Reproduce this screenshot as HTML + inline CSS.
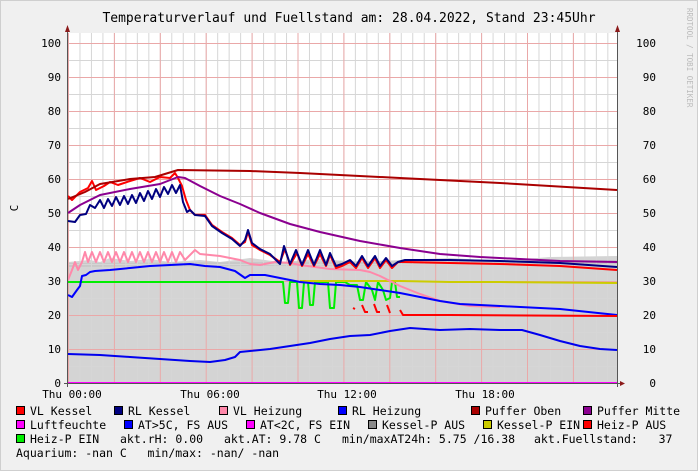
<!DOCTYPE html>
<html><head><meta charset="utf-8"><style>
html,body{margin:0;padding:0;background:#f0f0f0;}
svg{display:block;font-family:"DejaVu Sans Mono","Liberation Mono",monospace;}
text{white-space:pre;}
</style></head><body>
<svg width="698" height="471" viewBox="0 0 698 471" xmlns="http://www.w3.org/2000/svg">
<defs>
<pattern id="vmin" patternUnits="userSpaceOnUse" x="68" y="0" width="11.475" height="10"><line x1="0.5" y1="0" x2="0.5" y2="10" stroke="#d6d6d6" stroke-width="1"/></pattern>
<pattern id="vmaj" patternUnits="userSpaceOnUse" x="68" y="0" width="45.9" height="10"><line x1="0.5" y1="0" x2="0.5" y2="10" stroke="#eaa8a8" stroke-width="1"/></pattern>
<pattern id="hmin" patternUnits="userSpaceOnUse" x="0" y="383" width="10" height="17"><line x1="0" y1="0.5" x2="10" y2="0.5" stroke="#d6d6d6" stroke-width="1"/></pattern>
<pattern id="hmaj" patternUnits="userSpaceOnUse" x="0" y="383" width="10" height="34"><line x1="0" y1="0.5" x2="10" y2="0.5" stroke="#eaa8a8" stroke-width="1"/></pattern>
</defs>
<rect x="0" y="0" width="698" height="471" fill="#f0f0f0"/>
<rect x="0.5" y="0.5" width="697" height="470" fill="none" stroke="#cfcfcf"/>
<text x="349" y="22" text-anchor="middle" font-size="13" fill="#000">Temperaturverlauf und Fuellstand am: 28.04.2022, Stand 23:45Uhr</text>
<text transform="translate(687,8) rotate(90)" font-size="7.5" fill="#bbb">RRDTOOL / TOBI OETIKER</text>
<rect x="68" y="33" width="549" height="350" fill="#fff"/>
<path d="M68 383 L68 262 L90 260 L100 262 L110 258 L130 261 L150 259 L170 262 L200 260 L220 262 L250 258 L280 262 L320 259 L360 262 L400 260 L450 258 L500 261 L550 257 L617 256 L617 383 Z" fill="#d4d4d4"/>
<path d="M68 265 L617 262" stroke="#c8c8c8" stroke-width="4" fill="none"/>
<rect x="68" y="33" width="549" height="350" fill="url(#vmin)"/>
<rect x="68" y="33" width="549" height="350" fill="url(#hmin)"/>
<rect x="68" y="33" width="549" height="350" fill="url(#vmaj)"/>
<rect x="68" y="33" width="549" height="350" fill="url(#hmaj)"/>
<g fill="none" stroke-width="2" stroke-linejoin="round">
<path d="M68 282 L280 282 L283 282 L285 303 L288 303 L290 282 L297 282 L299 308 L302 308 L304 282 L308 282 L310 305 L313 305 L315 282 L328 282 L330 308 L334 308 L336 282 L345 282 L350 285 L357 285 L360 300 L363 300 L366 282 L372 290 L375 300 L378 282 L383 290 L386 300 L390 298 L392 282 L395 282 L397 297 L400 297" stroke="#00ee00"/>
<path d="M300 281 L400 281 L450 282 L500 282 L617 283" stroke="#cccc00"/>
<path d="M68 354 L100 355 L130 357 L160 359 L190 361 L210 362 L225 360 L235 357 L240 352 L250 351 L270 349 L290 346 L310 343 L330 339 L350 336 L370 335 L390 331 L410 328 L440 330 L470 329 L500 330 L522 330 L540 335 L560 341 L580 346 L600 349 L617 350" stroke="#0000ee"/>
<path d="M68 280 L72 270 L75 262 L78 270 L82 262 L85 252 L88 262 L92 252 L96 262 L100 252 L104 262 L108 252 L112 262 L116 252 L120 262 L124 252 L128 262 L132 252 L136 262 L140 252 L144 262 L148 252 L152 262 L156 252 L160 262 L164 252 L168 262 L172 252 L176 262 L180 252 L185 260 L195 250 L200 254 L220 256 L240 260 L250 264 L260 265 L275 262 L290 263 L300 265 L330 269 L360 270 L370 272 L380 276 L400 286 L420 294 L440 301 L470 306 L500 307" stroke="#ff88aa"/>
<path d="M68 295 L72 297 L77 290 L80 286 L82 276 L86 275 L90 272 L95 271 L110 270 L130 268 L150 266 L170 265 L190 264 L205 266 L220 267 L235 271 L245 278 L250 275 L265 275 L280 278 L300 282 L320 284 L340 285 L360 287 L380 290 L400 293 L420 297 L440 301 L460 304 L500 306 L560 309 L617 315" stroke="#0000ff"/>
<path d="M353 308 L355 309 M362 305 L365 312 L368 312 M374 304 L377 312 L380 312 M387 305 L390 313 M400 310 L403 315 L450 315 L617 316" stroke="#ff0000"/>
<path d="M68 196 L72 200 L80 192 L88 188 L92 181 L96 190 L104 186 L110 182 L118 185 L130 181 L140 178 L150 182 L160 177 L170 178 L175 173 L178 178 L182 186 L186 200 L190 210 L195 215 L205 215 L212 225 L222 232 L232 238 L240 245 L245 242 L248 232 L252 245 L260 250 L270 255 L280 262 L285 249 L290 265 L297 253 L302 266 L308 254 L314 266 L320 254 L326 266 L330 255 L336 268 L342 266 L350 262 L356 268 L362 258 L368 268 L375 258 L380 268 L386 260 L392 268 L398 262 L405 262 L450 263 L500 264 L560 266 L617 270" stroke="#ff0000"/>
<path d="M68 221 L75 222 L80 215 L86 214 L90 205 L95 208 L100 200 L104 208 L108 199 L112 206 L116 197 L120 205 L124 196 L128 204 L132 195 L136 203 L140 193 L144 201 L148 191 L152 199 L156 189 L160 197 L164 187 L168 194 L172 185 L176 193 L180 185 L183 202 L187 212 L190 210 L195 215 L205 216 L212 226 L222 233 L232 239 L240 246 L245 240 L248 230 L252 243 L260 249 L270 254 L280 264 L284 246 L290 264 L296 250 L302 265 L308 250 L314 265 L320 250 L326 265 L330 253 L336 266 L342 264 L350 260 L356 266 L362 256 L368 266 L375 256 L380 266 L386 258 L392 266 L398 262 L405 260 L450 260 L500 261 L560 263 L617 267" stroke="#000080"/>
<path d="M68 213 L80 205 L100 195 L130 189 L160 184 L178 177 L185 178 L200 186 L220 196 L240 204 L260 213 L290 224 L320 232 L360 241 L400 248 L440 254 L480 257 L520 259 L560 261 L617 262" stroke="#8b0090"/>
<path d="M68 199 L85 192 L100 184 L130 179 L155 177 L178 170 L250 171 L300 173 L400 178 L500 183 L617 190" stroke="#aa0000"/>
</g>
<line x1="68" y1="383" x2="617" y2="383" stroke="#ff00ff" stroke-width="2"/>
<line x1="67.5" y1="30" x2="67.5" y2="387" stroke="#555"/>
<line x1="617.5" y1="30" x2="617.5" y2="387" stroke="#555"/>
<line x1="64" y1="383.5" x2="620" y2="383.5" stroke="#555"/>
<path d="M65 32 L70 32 L67.5 25 Z M615 32 L620 32 L617.5 25 Z M620 381 L620 386 L625 383.5 Z" fill="#8b1a1a"/>
<g font-size="11" fill="#000" text-anchor="end">
<text x="61" y="47">100</text><text x="61" y="81">90</text><text x="61" y="115">80</text><text x="61" y="149">70</text><text x="61" y="183">60</text><text x="61" y="217">50</text><text x="61" y="251">40</text><text x="61" y="285">30</text><text x="61" y="319">20</text><text x="61" y="353">10</text><text x="61" y="387">0</text>
<text x="656" y="47">100</text><text x="656" y="81">90</text><text x="656" y="115">80</text><text x="656" y="149">70</text><text x="656" y="183">60</text><text x="656" y="217">50</text><text x="656" y="251">40</text><text x="656" y="285">30</text><text x="656" y="319">20</text><text x="656" y="353">10</text><text x="656" y="387">0</text>
</g>
<text transform="translate(18,208) rotate(-90)" font-size="11" text-anchor="middle">C</text>
<g font-size="11" text-anchor="middle">
<text x="72" y="398">Thu 00:00</text><text x="210" y="398">Thu 06:00</text><text x="347" y="398">Thu 12:00</text><text x="485" y="398">Thu 18:00</text>
</g>
<g stroke="#000" stroke-width="1">
<rect x="16.5" y="406.5" width="8" height="8" fill="#ff0000"/>
<rect x="114.5" y="406.5" width="8" height="8" fill="#000080"/>
<rect x="219.5" y="406.5" width="8" height="8" fill="#ff88aa"/>
<rect x="338.5" y="406.5" width="8" height="8" fill="#0000ff"/>
<rect x="471.5" y="406.5" width="8" height="8" fill="#aa0000"/>
<rect x="583.5" y="406.5" width="8" height="8" fill="#8b0090"/>
<rect x="16.5" y="420.5" width="8" height="8" fill="#ff00ff"/>
<rect x="124.5" y="420.5" width="8" height="8" fill="#0000ff"/>
<rect x="246.5" y="420.5" width="8" height="8" fill="#ff00ff"/>
<rect x="368.5" y="420.5" width="8" height="8" fill="#888888"/>
<rect x="483.5" y="420.5" width="8" height="8" fill="#cccc00"/>
<rect x="583.5" y="420.5" width="8" height="8" fill="#ff0000"/>
<rect x="16.5" y="434.5" width="8" height="8" fill="#00ee00"/>
</g>
<g font-size="11.5" fill="#000">
<text x="30" y="415">VL Kessel</text>
<text x="128" y="415">RL Kessel</text>
<text x="233" y="415">VL Heizung</text>
<text x="352" y="415">RL Heizung</text>
<text x="485" y="415">Puffer Oben</text>
<text x="597" y="415">Puffer Mitte</text>
<text x="30" y="429">Luftfeuchte</text>
<text x="138" y="429">AT&gt;5C, FS AUS</text>
<text x="260" y="429">AT&lt;2C, FS EIN</text>
<text x="382" y="429">Kessel-P AUS</text>
<text x="497" y="429">Kessel-P EIN</text>
<text x="597" y="429">Heiz-P AUS</text>
<text x="30" y="443">Heiz-P EIN</text>
<text x="120" y="443">akt.rH: 0.00</text>
<text x="224" y="443">akt.AT: 9.78 C</text>
<text x="342" y="443">min/maxAT24h: 5.75 /16.38</text>
<text x="534" y="443">akt.Fuellstand:   37</text>
<text x="16" y="457">Aquarium: -nan C   min/max: -nan/ -nan</text>
</g>
</svg>
</body></html>
